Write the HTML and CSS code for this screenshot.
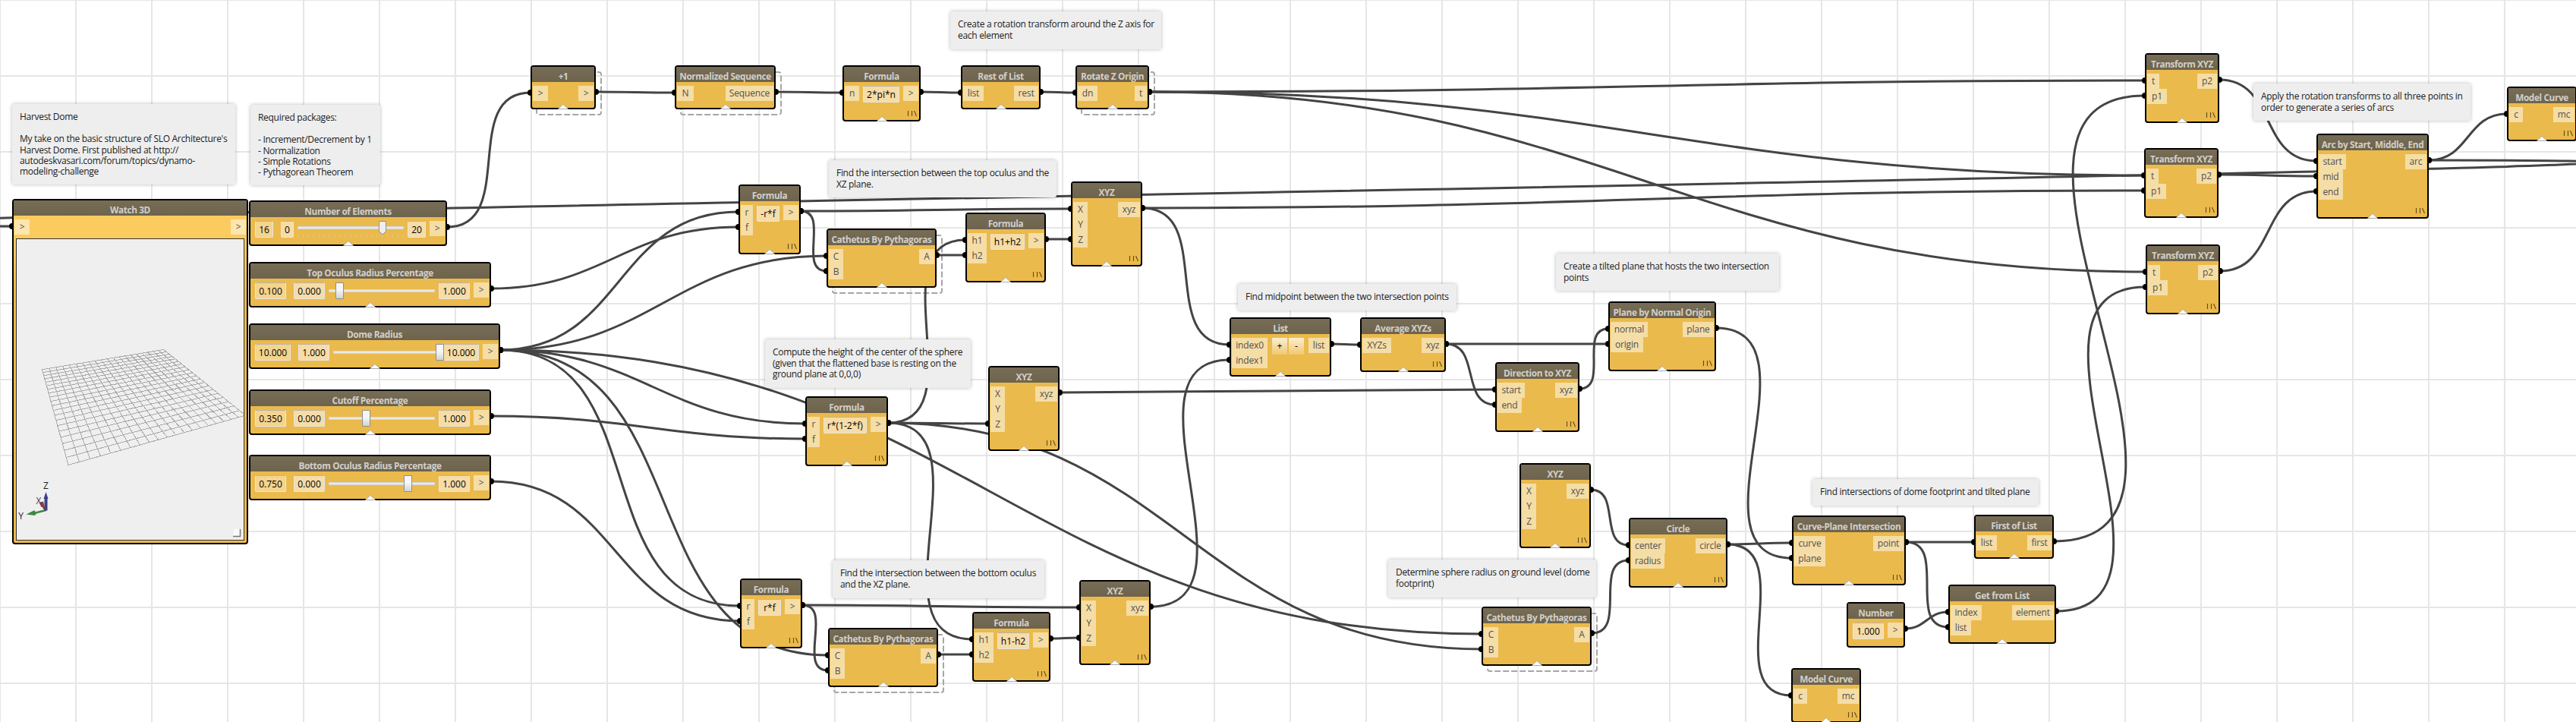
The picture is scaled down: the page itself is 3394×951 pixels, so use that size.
FILE: index.html
```html
<!DOCTYPE html>
<html lang="en">
<head>
<meta charset="utf-8">
<title>Harvest Dome</title>
<link rel="stylesheet" href="styles.css">
</head>
<body>
<main class="workspace" id="workspace">
  <svg class="wires" id="wires" width="3394" height="951" viewBox="0 0 3394 951"></svg>
</main>
<script src="graph.js"></script>
</body>
</html>
```
FILE: styles.css
```css
* { box-sizing: border-box; }

body {
  margin: 0;
  font-family: "Open Sans", "Noto Sans", sans-serif;
  font-size: 12px;
}

.workspace {
  position: relative;
  width: 3394px;
  height: 951px;
  overflow: hidden;
  background-color: #fff;
  background-image:
    linear-gradient(to right, #e6e6e6 2px, transparent 2px),
    linear-gradient(to bottom, #e6e6e6 2px, transparent 2px);
  background-size: 100px 100px;
  background-position: -1px -1px;
}

.wires { position: absolute; left: 0; top: 0; }
.wire { fill: none; stroke: #444; stroke-width: 3; }
.dot { fill: #000; }
.ghost { fill: none; stroke: #a6a6a6; stroke-width: 2; stroke-dasharray: 8 3; }

/* Notes */
.note {
  position: absolute;
  left: var(--x);
  top: var(--y);
  width: var(--w);
  height: var(--h);
  padding: 10.3px 0 0 10px;
  border-radius: 3px;
  background: #eee;
  box-shadow: 0 0 5px rgba(0, 0, 0, .28);
  color: #1c1c1c;
  font-size: 12px;
  line-height: 14.4px;
  letter-spacing: -.3px;
  white-space: pre;
}

/* Nodes */
.node {
  position: absolute;
  left: var(--x);
  top: var(--y);
  width: var(--w);
  height: var(--h);
  display: flex;
  flex-direction: column;
  border: 2px solid #000;
  border-radius: 4px;
  background: #ebba4c;
}
.node-title {
  flex: none;
  height: 20px;
  padding-top: 4px;
  background: linear-gradient(#776c55, #6e634c);
  color: #d2cfc9;
  font-size: 11.8px;
  font-weight: 700;
  line-height: 16px;
  letter-spacing: -.38px;
  text-align: center;
  white-space: nowrap;
}
.node-body {
  flex: 1;
  display: flex;
  justify-content: space-between;
  align-items: flex-start;
  padding: 5px 1px 0;
}
.ports { display: flex; flex-direction: column; align-items: flex-start; }
.port {
  width: var(--w);
  height: 20px;
  background: rgba(255, 255, 255, .5);
  color: #505050;
  letter-spacing: -.15px;
  line-height: 19px;
  text-align: center;
  white-space: nowrap;
}
.controls { flex: 1; display: flex; padding: 0 5px; }
.field {
  width: var(--w);
  height: 22px;
  border: 1px solid #e6e6e6;
  border-top-color: #b9b4ab;
  border-radius: 2px;
  background: #f6dca7;
  color: #000;
  line-height: 21px;
  text-align: center;
}
.field.value { margin-right: 10px; background: #f4d48e; }
.step {
  width: 20px;
  height: 22px;
  margin: 0 1px;
  background: linear-gradient(#fbeed3, #f0c870);
  color: #000;
  line-height: 22px;
  text-align: center;
}
.slider { position: relative; width: 140px; height: 22px; margin: 0 5px; }
.track {
  position: absolute;
  left: 0;
  top: 9px;
  width: 140px;
  height: 4px;
  border: 1px solid #d6d6d6;
  background: #e7eaea;
}
.thumb {
  position: absolute;
  left: var(--x);
  top: 0;
  width: 11px;
  height: 22px;
  border: 1px solid #8e8e8e;
  border-radius: 1px;
  background: linear-gradient(#f6f6f6 45%, #d2d2d2);
}
.slider.ticked .track { top: 7px; }
.ticks { position: absolute; left: 0; top: 0; }
.handle { position: absolute; left: 50%; bottom: -2px; margin-left: -8px; }
.library { position: absolute; right: 3px; bottom: 4px; }

/* 3D preview */
.watch { background: linear-gradient(#fbcb5f, #fbcb5f 60px, #ebba4c 120px); }
.watch .node-body { flex: none; height: 30px; }
.view {
  display: block;
  margin: 0 3px 3px;
  border: 1px solid #333;
  background: #efefef;
  font-size: 12px;
}
.mesh { fill: none; stroke: #a9a9a9; stroke-width: 1; shape-rendering: crispEdges; }
```
FILE: graph.js
```js
const workspace = document.getElementById('workspace');
const wires = document.getElementById('wires');

const portWidths = {
  '>': 20, N: 22, Sequence: 63, n: 19, list: 27, rest: 32, dn: 26, t: 16, r: 16, f: 16,
  C: 19, B: 19, A: 20, h1: 25, h2: 25, X: 19, Y: 19, Z: 19, xyz: 29, XYZs: 38,
  index0: 47, index1: 47, start: 36, end: 32, normal: 49, origin: 43, plane: 41,
  center: 45, radius: 44, circle: 39, curve: 41, point: 40, first: 32, index: 41,
  element: 55, c: 18, mc: 28, p1: 26, p2: 26, arc: 28, mid: 32
};

/* id: title, x, y, width, height, inputs, outputs, options */
const nodes = {
  elements: ['Number of Elements', 328, 264, 261, 60, [], ['>'], { slider: ['16', 24, '0', 17, '20', 24, 107], ticks: true }],
  top: ['Top Oculus Radius Percentage', 328, 345, 319, 60, [], ['>'], { slider: ['0.100', 41, '0.000', 41, '1.000', 41, 9] }],
  dome: ['Dome Radius', 328, 426, 331, 60, [], ['>'], { slider: ['10.000', 47, '1.000', 41, '10.000', 47, 135] }],
  cutoff: ['Cutoff Percentage', 328, 513, 319, 60, [], ['>'], { slider: ['0.350', 41, '0.000', 41, '1.000', 41, 44] }],
  bottom: ['Bottom Oculus Radius Percentage', 328, 599, 319, 60, [], ['>'], { slider: ['0.750', 41, '0.000', 41, '1.000', 41, 99] }],
  plus: ['+1', 699, 86, 86, 58, ['>'], ['>'], { ghost: true }],
  norm: ['Normalized Sequence', 889, 86, 133, 58, ['N'], ['Sequence'], { ghost: true }],
  pi: ['Formula', 1110, 86, 103, 74, ['n'], ['>'], { field: ['2*pi*n', 48], lib: true }],
  rest: ['Rest of List', 1266, 86, 105, 58, ['list'], ['rest'], {}],
  rot: ['Rotate Z Origin', 1417, 86, 97, 58, ['dn'], ['t'], { ghost: true }],
  rfTop: ['Formula', 973, 243, 82, 92, ['r', 'f'], ['>'], { field: ['-r*f', 30], lib: true }],
  cath1: ['Cathetus By Pythagoras', 1089, 301, 145, 78, ['C', 'B'], ['A'], { ghost: true }],
  sum: ['Formula', 1272, 280, 106, 92, ['h1', 'h2'], ['>'], { field: ['h1+h2', 45], lib: true }],
  xyz1: ['XYZ', 1411, 239, 94, 112, ['X', 'Y', 'Z'], ['xyz'], { lib: true }],
  height: ['Formula', 1061, 522, 109, 92, ['r', 'f'], ['>'], { field: ['r*(1-2*f)', 57], lib: true }],
  xyz2: ['XYZ', 1302, 482, 94, 112, ['X', 'Y', 'Z'], ['xyz'], { lib: true }],
  rfBot: ['Formula', 975, 762, 82, 92, ['r', 'f'], ['>'], { field: ['r*f', 30], lib: true }],
  cath2: ['Cathetus By Pythagoras', 1091, 827, 145, 78, ['C', 'B'], ['A'], { ghost: true }],
  diff: ['Formula', 1281, 806, 103, 92, ['h1', 'h2'], ['>'], { field: ['h1-h2', 42], lib: true }],
  xyz3: ['XYZ', 1422, 764, 94, 112, ['X', 'Y', 'Z'], ['xyz'], { lib: true }],
  list: ['List', 1620, 418, 134, 78, ['index0', 'index1'], ['list'], { steps: true }],
  avg: ['Average XYZs', 1792, 418, 113, 72, ['XYZs'], ['xyz'], { lib: true }],
  dir: ['Direction to XYZ', 1970, 477, 111, 92, ['start', 'end'], ['xyz'], { lib: true }],
  plane: ['Plane by Normal Origin', 2119, 397, 142, 92, ['normal', 'origin'], ['plane'], { lib: true }],
  xyz4: ['XYZ', 2002, 610, 94, 112, ['X', 'Y', 'Z'], ['xyz'], { lib: true }],
  cath3: ['Cathetus By Pythagoras', 1952, 799, 145, 78, ['C', 'B'], ['A'], { ghost: true }],
  circle: ['Circle', 2146, 682, 130, 92, ['center', 'radius'], ['circle'], { lib: true }],
  cpi: ['Curve-Plane Intersection', 2361, 679, 150, 92, ['curve', 'plane'], ['point'], { lib: true }],
  first: ['First of List', 2601, 678, 105, 58, ['list'], ['first'], {}],
  get: ['Get from List', 2567, 770, 142, 78, ['index', 'list'], ['element'], {}],
  num: ['Number', 2433, 793, 77, 60, [], ['>'], { field: ['1.000', 41], bare: true }],
  mc1: ['Model Curve', 2360, 880, 92, 72, ['c'], ['mc'], { lib: true }],
  t1: ['Transform XYZ', 2826, 70, 98, 92, ['t', 'p1'], ['p2'], { lib: true }],
  t2: ['Transform XYZ', 2825, 195, 98, 92, ['t', 'p1'], ['p2'], { lib: true }],
  t3: ['Transform XYZ', 2827, 322, 98, 92, ['t', 'p1'], ['p2'], { lib: true }],
  arc: ['Arc by Start, Middle, End', 3052, 176, 148, 112, ['start', 'mid', 'end'], ['arc'], { lib: true }],
  mc2: ['Model Curve', 3303, 114, 92, 72, ['c'], ['mc'], { lib: true }],
  watch: ['Watch 3D', 16, 262, 311, 455, ['>'], ['>'], { view: true, bare: true }]
};

/* x, y, width, height, text */
const notes = [
  [16, 137, 294, 106, "Harvest Dome\n\nMy take on the basic structure of SLO Architecture's\nHarvest Dome. First published at http://\nautodeskvasari.com/forum/topics/dynamo-\nmodeling-challenge"],
  [330, 138, 171, 106, 'Required packages:\n\n- Increment/Decrement by 1\n- Normalization\n- Simple Rotations\n- Pythagorean Theorem'],
  [1252, 15, 278, 50, 'Create a rotation transform around the Z axis for\neach element'],
  [1092, 211, 300, 49, 'Find the intersection between the top oculus and the\nXZ plane.'],
  [1008, 447, 271, 64, 'Compute the height of the center of the sphere\n(given that the flattened base is resting on the\nground plane at 0,0,0)'],
  [1097, 738, 279, 50, 'Find the intersection between the bottom oculus\nand the XZ plane.'],
  [1631, 374, 288, 35, 'Find midpoint between the two intersection points'],
  [2050, 334, 294, 49, 'Create a tilted plane that hosts the two intersection\npoints'],
  [1829, 737, 274, 50, 'Determine sphere radius on ground level (dome\nfootprint)'],
  [2388, 631, 298, 35, 'Find intersections of dome footprint and tilted plane'],
  [2969, 110, 286, 49, 'Apply the rotation transforms to all three points in\norder to generate a series of arcs']
];

/* source node, target node, target port index */
const links = [
  ['elements', 'plus', 0], ['plus', 'norm', 0], ['norm', 'pi', 0], ['pi', 'rest', 0], ['rest', 'rot', 0],
  ['rot', 't1', 0], ['rot', 't2', 0], ['rot', 't3', 0],
  ['dome', 'rfTop', 0], ['top', 'rfTop', 1], ['dome', 'cath1', 0], ['dome', 'height', 0], ['cutoff', 'height', 1],
  ['dome', 'rfBot', 0], ['bottom', 'rfBot', 1], ['dome', 'cath2', 0], ['dome', 'cath3', 0],
  ['rfTop', 'xyz1', 0], ['rfTop', 'cath1', 1], ['cath1', 'sum', 1], ['height', 'sum', 0], ['sum', 'xyz1', 2],
  ['height', 'xyz2', 2], ['height', 'cath3', 1], ['height', 'diff', 0],
  ['rfBot', 'xyz3', 0], ['rfBot', 'cath2', 1], ['cath2', 'diff', 1], ['diff', 'xyz3', 2],
  ['xyz1', 't2', 1], ['xyz1', 'list', 0], ['xyz3', 'list', 1], ['xyz2', 'dir', 0],
  ['list', 'avg', 0], ['avg', 'plane', 1], ['avg', 'dir', 1], ['dir', 'plane', 0], ['plane', 'cpi', 1],
  ['xyz4', 'circle', 0], ['cath3', 'circle', 1], ['circle', 'cpi', 0], ['circle', 'mc1', 0],
  ['cpi', 'first', 0], ['cpi', 'get', 1], ['num', 'get', 0], ['first', 't1', 1], ['get', 't3', 1],
  ['t1', 'arc', 0], ['t2', 'arc', 1], ['t3', 'arc', 2], ['arc', 'mc2', 0], ['arc', 'watch', 0]
];

const box = (x, y, w, h) => `--x:${x}px;--y:${y}px;--w:${w}px;--h:${h}px`;
const portColumn = (names) => names.length
  ? `<div class="ports">${names.map((n) => `<div class="port" style="--w:${portWidths[n]}px">${n === '>' ? '&gt;' : n}</div>`).join('')}</div>`
  : '';

function sliderHtml([value, vw, min, mw, max, xw, thumb], ticked) {
  const marks = Array.from({ length: 21 }, (_, i) => `M${(0.5 + i * 6.95).toFixed(1)} 18v4`).join('');
  return `<div class="field value" style="--w:${vw}px">${value}</div>
    <div class="field" style="--w:${mw}px">${min}</div>
    <div class="slider${ticked ? ' ticked' : ''}"><div class="track"></div>${ticked
      ? `<svg class="ticks" width="140" height="22"><path d="${marks}" stroke="#d8c9a2"/>
         <path d="M${thumb + .5} .5h9v13l-4.500 4.500-4.500-4.500z" fill="#eee" stroke="#8e8e8e"/></svg>`
      : `<div class="thumb" style="--x:${thumb}px"></div>`}</div>
    <div class="field" style="--w:${xw}px">${max}</div>`;
}

/* Perspective ground grid, mapped from a unit square onto four corners */
function meshPath() {
  const [x0, y0, x1, y1, x2, y2, x3, y3] = [33.500, 171.700, 193.500, 145.500, 301.700, 232.100, 68, 297.500];
  const sx = x0 - x1 + x2 - x3, sy = y0 - y1 + y2 - y3;
  const dx1 = x1 - x2, dx2 = x3 - x2, dy1 = y1 - y2, dy2 = y3 - y2;
  const det = dx1 * dy2 - dx2 * dy1;
  const g = (sx * dy2 - dx2 * sy) / det, h = (dx1 * sy - sx * dy1) / det;
  const at = (u, v) => {
    const w = g * u + h * v + 1;
    const x = ((x1 - x0 + g * x1) * u + (x3 - x0 + h * x3) * v + x0) / w;
    const y = ((y1 - y0 + g * y1) * u + (y3 - y0 + h * y3) * v + y0) / w;
    return x.toFixed(1) + ' ' + y.toFixed(1);
  };
  let d = '';
  for (let i = 0; i <= 20; i++) {
    const t = i / 20;
    d += `M${at(t, 0)}L${at(t, 1)}M${at(0, t)}L${at(1, t)}`;
  }
  return d;
}

const viewHtml = () => `<svg class="view" width="301" height="399">
  <path class="mesh" d="${meshPath()}"/>
  <path d="M38 357L32.500 348.500" stroke="#8a4040" stroke-width="3"/><path d="M29.500 347l5.500-1.500 1.500 6-4 1.500z" fill="#8a4040"/>
  <path d="M38.500 357L23 361" stroke="#3f873f" stroke-width="2.500"/><path d="M12.500 362.500l11-5.500 2 5-1.500 2z" fill="#3f873f"/>
  <path d="M38.500 357.500V340" stroke="#3f3f87" stroke-width="4"/><path d="M38.500 333l3 9h-6z" fill="#3f3f87"/>
  <g text-anchor="middle" fill="#222"><text x="38.500" y="329">Z</text><text x="29" y="349" fill="#444">X</text><text x="5.500" y="369">Y</text></g>
  <path d="M286 382h9v10h-10" fill="#fafafa"/><path d="M294.500 382v9.500H285" fill="none" stroke="#777" stroke-width="1.500"/>
</svg>`;

let svg = '';
let html = '';

for (const [x, y, w, h, text] of notes) {
  html += `<div class="note" style="${box(x, y, w, h)}">${text}</div>`;
}

for (const [title, x, y, w, h, ins, outs, opt] of Object.values(nodes)) {
  let controls = '';
  if (opt.slider) controls = sliderHtml(opt.slider, opt.ticks);
  if (opt.field) controls = `<div class="field" style="--w:${opt.field[1]}px">${opt.field[0]}</div>`;
  if (opt.steps) controls = '<div class="step">+</div><div class="step">-</div>';
  if (opt.ghost) svg += `<rect class="ghost" x="${x + 8}" y="${y + 9}" width="${w - 1}" height="${h - 2}" rx="3"/>`;
  html += `<section class="node${opt.view ? ' watch' : ''}" style="${box(x, y, w, h)}">
    <div class="node-title">${title}</div>
    <div class="node-body">${portColumn(ins)}<div class="controls">${controls}</div>${portColumn(outs)}</div>
    ${opt.view ? viewHtml() : ''}
    ${opt.lib ? '<svg class="library" width="13" height="8"><path d="M1.500 0v7M6.500 0v7M9.500 0l3 7" fill="none" stroke="#5d4a1e" stroke-width="1.100"/></svg>' : ''}
    ${opt.bare ? '' : '<svg class="handle" width="16" height="7"><path d="M1.500 6.500L8 .5l6.500 6z" fill="#fff" stroke="#aaa"/></svg>'}
  </section>`;
}

let dots = '';
for (const [from, to, port] of links) {
  const [, fx, fy, fw] = nodes[from];
  const [, tx, ty] = nodes[to];
  const x1 = fx + fw, y1 = fy + 35, x2 = tx, y2 = ty + 36 + port * 20;
  const off = 0.45 * Math.hypot(x2 - x1, y2 - y1);
  svg += `<path class="wire" d="M${x1} ${y1}C${x1 + off} ${y1} ${x2 - off} ${y2} ${x2} ${y2}"/>`;
  dots += `<circle class="dot" cx="${x1}" cy="${y1}" r="4"/><circle class="dot" cx="${x2}" cy="${y2}" r="4"/>`;
}

wires.innerHTML = svg + dots;
workspace.insertAdjacentHTML('beforeend', html);
```
